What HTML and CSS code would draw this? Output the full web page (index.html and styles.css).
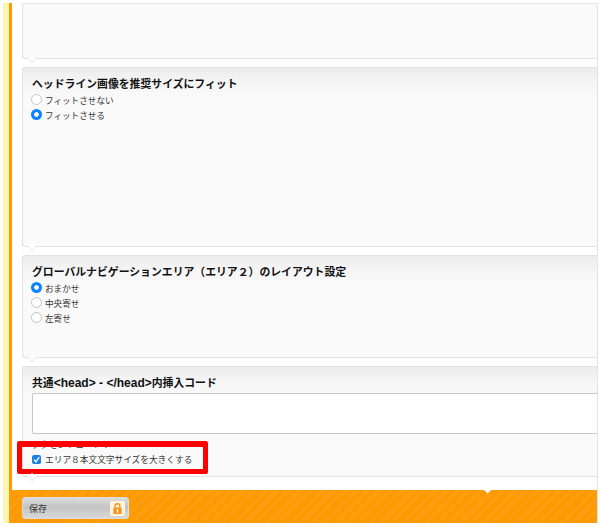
FILE: index.html
```html
<!DOCTYPE html>
<html lang="ja">
<head>
<meta charset="utf-8">
<title>設定</title>
<link rel="stylesheet" href="styles.css">
</head>
<body>
<div class="frame">
  <main class="content">
    <section class="panel panel-empty"></section>
    <section class="panel panel-fit">
      <h3 class="title">ヘッドライン画像を推奨サイズにフィット</h3>
      <label class="opt"><span class="radio"></span>フィットさせない</label>
      <label class="opt"><span class="radio on"></span>フィットさせる</label>
    </section>
    <section class="panel panel-nav">
      <h3 class="title">グローバルナビゲーションエリア（エリア２）のレイアウト設定</h3>
      <label class="opt"><span class="radio on"></span>おまかせ</label>
      <label class="opt"><span class="radio"></span>中央寄せ</label>
      <label class="opt"><span class="radio"></span>左寄せ</label>
    </section>
    <section class="panel panel-head">
      <h3 class="title">共通<span class="latin">&lt;head&gt; - &lt;/head&gt;</span>内挿入コード</h3>
      <div class="codebox"></div>
      <div class="access">アクセントコード：</div>
      <div class="highlight">
        <label class="opt check-opt"><span class="check"><svg viewBox="0 0 9 9" width="9" height="9"><path d="M2 4.6 3.9 6.8 7.2 2.2" fill="none" stroke="#fff" stroke-width="1.4"/></svg></span>エリア８本文文字サイズを大きくする</label>
      </div>
    </section>
  </main>
  <footer class="bar">
    <span class="bar-notch"></span>
    <button class="save" type="button">
      <span class="save-label">保存</span>
      <span class="lock"><svg viewBox="0 0 16 18"><path d="M4.5 8V5.5a3.5 3.5 0 0 1 7 0V8" fill="none" stroke="#f7941d" stroke-width="2"/><rect x="2" y="7.5" width="12" height="9.5" rx="1" fill="#f7941d"/><rect x="7" y="10" width="2" height="5" fill="#fff"/></svg></span>
    </button>
  </footer>
</div>
</body>
</html>
```
FILE: styles.css
```css
* { box-sizing: border-box; }
html, body { margin: 0; padding: 0; background: #fff; }
body {
  width: 600px; height: 527px; overflow: hidden;
  padding: 3px 2px 4px 3px;
  font-family: "Liberation Sans", "Noto Sans CJK JP", sans-serif;
  color: #222;
}
.frame {
  height: 520px;
  display: flex; flex-direction: column;
  border-right: 1px solid #e4e4e4;
  border-left: 6px solid #fdf6b0;
  background: #fff;
  overflow: hidden;
}
.content {
  flex: 1; min-height: 0;
  border-left: 3px solid #ff9900;
  display: flex; flex-direction: column; gap: 8px;
  overflow: hidden;
  background: #fff;
}
.panel {
  margin-left: 10px;
  border: 1px solid #e2e2e2;
  border-right: 0;
  border-radius: 3px 0 0 3px;
  background: linear-gradient(#ececec, #f6f6f6 16px, #fafafa 30px);
  padding: 10px 0 0 9px;
  position: relative;
  flex: none;
}
.panel::after {
  content: ""; position: absolute; left: 5px; bottom: -5px;
  width: 7px; height: 7px; transform: rotate(45deg) scale(.75);
  background: #fff;
  border-right: 1px solid #e2e2e2; border-bottom: 1px solid #e2e2e2;
}
.panel-empty { height: 56px; border-radius: 0 0 0 3px; background: #fafafa; border-top: 1px solid #e6e6e6; }
.panel-fit { height: 180px; }
.panel-nav { height: 103px; }
.panel-head { height: 111px; }
.title {
  margin: 0 0 1px; font-size: 10.85px; line-height: 13px; font-weight: 700; color: #111;
}
.latin { font-size: 12px; }
.opt {
  display: flex; align-items: center; gap: 3px;
  height: 15px; font-size: 8.6px; color: #333; margin-left: -1px;
  white-space: nowrap;
}
.radio {
  width: 11px; height: 11px; border-radius: 50%; flex: none;
  background: #fff; border: 1px solid #c4c4c4;
}
.radio.on {
  border: 0;
  background: radial-gradient(circle, #fff 0 2px, #0a84ff 2.6px);
}
.codebox {
  height: 41px; margin-top: 3px;
  background: #fff; border: 1px solid #c8c8c8; border-right: 0; border-radius: 2px 0 0 2px;
}
.access { font-size: 8.75px; line-height: 12px; margin-top: 5px; color: #333; }
.highlight {
  position: absolute; left: -6px; top: 74px;
  width: 191px; height: 33px;
  border-style: solid; border-color: #f00; border-width: 6px 5px 5px;
  border-radius: 2px;
  padding: 5px 0 0 10px;
}
.check-opt { gap: 4px; margin-left: 0; height: 14px; font-size: 8.7px; }
.check {
  width: 9px; height: 9px; border-radius: 2px; background: #1a7fe8; flex: none;
  display: flex; align-items: center; justify-content: center;
}
.check svg { flex: none; }
.bar {
  height: 33px; flex: none; position: relative;
  background: repeating-linear-gradient(135deg, #ff9900 0 4px, #fd9e10 4px 8px);
  padding: 7px 0 0 13px;
}
.bar-notch {
  position: absolute; left: 475px; top: -5px; width: 7px; height: 7px;
  background: #fff; transform: rotate(45deg);
}
.save {
  display: flex; align-items: center; justify-content: space-between;
  width: 107px; height: 22px; padding: 0 3px 0 6px;
  border: 1px solid #dcdcdc; border-radius: 3px;
  background: linear-gradient(#dcdcdc, #c4c4c4 45%, #d8d8d8);
  font: 9px "Liberation Sans", "Noto Sans CJK JP", sans-serif; color: #333;
}
.lock {
  width: 15px; height: 15px; background: #fff3dc; border-radius: 2px;
  display: flex; align-items: center; justify-content: center;
}
.lock svg { width: 11px; height: 13px; }
```
